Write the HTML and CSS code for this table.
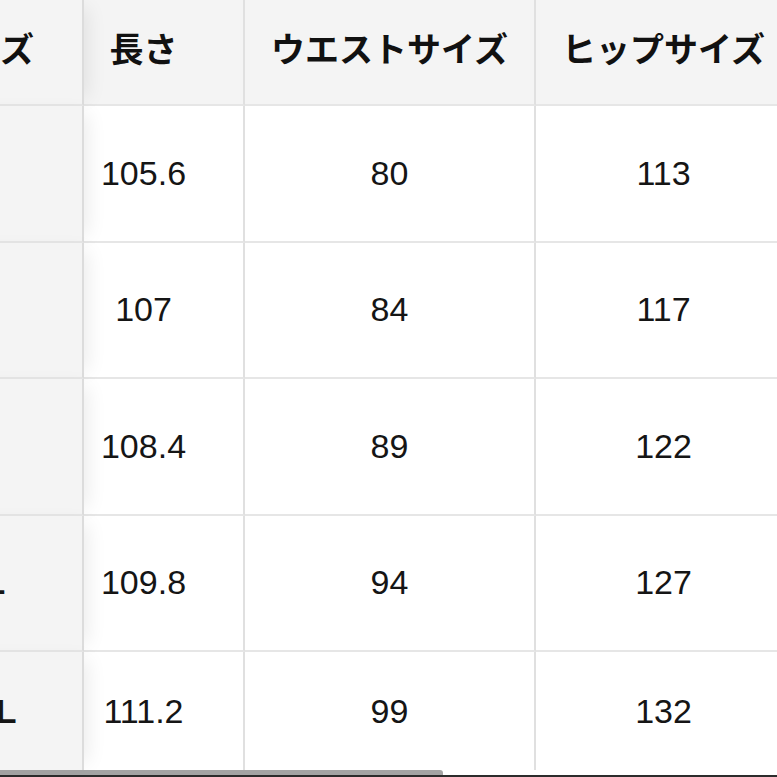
FILE: index.html
```html
<!DOCTYPE html>
<html lang="ja">
<head>
<meta charset="utf-8">
<title>サイズ表</title>
<link rel="stylesheet" href="styles.css">
</head>
<body>
<div class="frame">
  <div class="table">
    <div class="cell head first">サイズ</div>
    <div class="cell head col2">長さ</div>
    <div class="cell head">ウエストサイズ</div>
    <div class="cell head">ヒップサイズ</div>

    <div class="cell first">S</div>
    <div class="cell col2">105.6</div>
    <div class="cell">80</div>
    <div class="cell">113</div>

    <div class="cell first">M</div>
    <div class="cell col2">107</div>
    <div class="cell">84</div>
    <div class="cell">117</div>

    <div class="cell first">L</div>
    <div class="cell col2">108.4</div>
    <div class="cell">89</div>
    <div class="cell">122</div>

    <div class="cell first">XL</div>
    <div class="cell col2">109.8</div>
    <div class="cell">94</div>
    <div class="cell">127</div>

    <div class="cell first last">XXL</div>
    <div class="cell col2 last">111.2</div>
    <div class="cell last">99</div>
    <div class="cell last">132</div>
  </div>
  <div class="scroll"><div class="thumb"></div></div>
</div>
</body>
</html>
```

FILE: styles.css
```css
html, body {
  margin: 0;
  padding: 0;
  background: #ffffff;
}

.frame {
  width: 777px;
  height: 777px;
  overflow: hidden;
  background: #ffffff;
  display: flex;
  flex-direction: column;
}

.table {
  display: grid;
  grid-template-columns: 199px 161px 291px 257px;
  grid-template-rows: 106px repeat(4, 136.5px) 118px;
  margin-left: -115px;
  width: 908px;
  flex: none;
  font-family: "Liberation Sans", "Noto Sans CJK JP", sans-serif;
  font-size: 34px;
  color: #151515;
}

.cell {
  box-sizing: border-box;
  display: flex;
  align-items: center;
  justify-content: center;
  border-right: 2px solid #e0e0e0;
  border-bottom: 2px solid #e6e6e6;
  background: #ffffff;
  white-space: nowrap;
}

.cell.last {
  border-bottom: none;
}

.head {
  background: #f4f4f4;
  font-family: "Noto Sans CJK JP", "Liberation Sans", sans-serif;
  font-weight: 700;
  padding-bottom: 10px;
  color: #111111;
}

.first {
  background: #f4f4f4;
  font-weight: 700;
  position: relative;
  z-index: 1;
  box-shadow: 12px 0 18px -8px rgba(0, 0, 0, 0.08);
  border-right: 2px solid #dcdcdc;
}

.col2 {
  padding-right: 40px;
}

.scroll {
  flex: none;
  height: 5px;
  background: #ffffff;
  border-bottom: 2px solid #2c2c2c;
  display: flex;
}

.thumb {
  width: 443px;
  height: 5px;
  background: #a4a4a4;
  border-radius: 0 3px 0 0;
}
```
